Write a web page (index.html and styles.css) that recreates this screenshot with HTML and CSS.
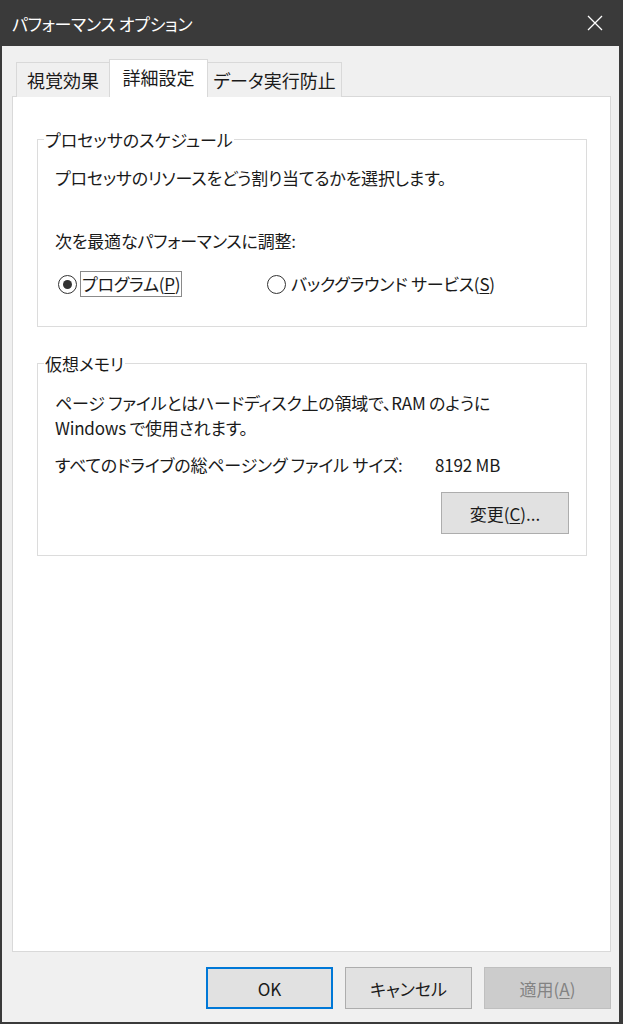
FILE: index.html
```html
<!DOCTYPE html>
<html lang="ja">
<head>
<meta charset="utf-8">
<title>パフォーマンス オプション</title>
<link rel="stylesheet" href="styles.css">
</head>
<body>
<div class="window">
  <div class="titlebar">
    <span class="title">パフォーマンス オプション</span>
    <svg class="close" width="16" height="16" viewBox="0 0 16 16"><path d="M1 1 L15 15 M15 1 L1 15" stroke="#ffffff" stroke-width="1.3" fill="none"/></svg>
  </div>
  <div class="client">
    <div class="tabs">
      <div class="tab tab1">視覚効果</div>
      <div class="tab tab-active">詳細設定</div>
      <div class="tab tab3">データ実行防止</div>
    </div>
    <div class="panel">
      <fieldset class="group group1">
        <legend>プロセッサのスケジュール</legend>
        <p class="line first">プロセッサのリソースをどう割り当てるかを選択します。</p>
        <p class="line adjust">次を最適なパフォーマンスに調整:</p>
        <div class="radios">
          <div class="radio-item item1">
            <span class="radio checked"></span>
            <span class="radio-label focus">プログラム(<u>P</u>)</span>
          </div>
          <div class="radio-item">
            <span class="radio"></span>
            <span class="radio-label">バックグラウンド サービス(<u>S</u>)</span>
          </div>
        </div>
      </fieldset>
      <fieldset class="group group2">
        <legend>仮想メモリ</legend>
        <p class="line first desc">ページ ファイルとはハードディスク上の領域で、RAM のように<br>Windows で使用されます。</p>
        <div class="line total"><span class="total-label">すべてのドライブの総ページング ファイル サイズ:</span><span>8192 MB</span></div>
        <div class="change-row"><button class="btn change">変更(<u>C</u>)...</button></div>
      </fieldset>
    </div>
    <div class="footer">
      <button class="btn default">OK</button>
      <button class="btn">キャンセル</button>
      <button class="btn disabled">適用(<u>A</u>)</button>
    </div>
  </div>
</div>
</body>
</html>
```
FILE: styles.css
```css
* { box-sizing: border-box; }
html, body { margin: 0; padding: 0; }
body {
  width: 623px;
  height: 1024px;
  background: #3a3a3a;
  font-family: "Noto Sans CJK JP", "Noto Sans", sans-serif;
  font-feature-settings: "palt";
  color: #1a1a1a;
  overflow: hidden;
}
.window {
  display: flex;
  flex-direction: column;
  height: 1024px;
}
.titlebar {
  height: 46px;
  flex: none;
  display: flex;
  align-items: center;
  justify-content: space-between;
  padding: 0 20px 0 12px;
  color: #ffffff;
  font-size: 17px;
}
.title { letter-spacing: -0.3px; }
.close { display: block; }
.client {
  flex: 1;
  margin: 0 4px 2px 2px;
  background: #f0f0f0;
  display: flex;
  flex-direction: column;
  padding: 13px 8px 13px 10px;
}
.tabs {
  display: flex;
  align-items: flex-end;
  margin-left: 4px;
  margin-bottom: -1px;
  position: relative;
  z-index: 1;
  font-size: 18px;
}
.tab {
  height: 35px;
  border: 1px solid #d9d9d9;
  border-bottom: none;
  background: #f0f0f0;
  display: flex;
  align-items: center;
  justify-content: center;
  line-height: 1;
}
.tab1 { width: 93px; border-right: none; }
.tab3 { width: 134px; border-left: none; }
.tab-active {
  width: 99px;
  height: 38px;
  background: #ffffff;
  padding-bottom: 3px;
}
.panel {
  flex: 1;
  background: #ffffff;
  border: 1px solid #d9d9d9;
  padding: 30px 23px 0 24px;
  font-size: 17px;
}
.group {
  margin: 0;
  border: 1px solid #dcdcdc;
  padding: 0 16px 0 17px;
  min-width: 0;
}
.group legend {
  padding: 0 1px;
  margin-left: -11px;
  line-height: 25px;
  font-size: 17px;
}
.line {
  margin: 0;
  line-height: 25px;
  letter-spacing: -0.2px;
}
.first { margin-top: 13px; }
.adjust { margin-top: 38px; }
.radios {
  display: flex;
  align-items: center;
  margin-top: 18px;
  margin-left: 3px;
  height: 26px;
  margin-bottom: 29px;
}
.radio-item {
  display: flex;
  align-items: center;
}
.item1 { width: 209px; }
.radio {
  width: 19px;
  height: 19px;
  border: 1.5px solid #333333;
  border-radius: 50%;
  display: flex;
  align-items: center;
  justify-content: center;
  margin-right: 3px;
  flex: none;
}
.radio.checked::after {
  content: "";
  width: 9px;
  height: 9px;
  border-radius: 50%;
  background: #333333;
}
.radio-label {
  line-height: 24px;
  letter-spacing: -0.2px;
  padding: 0 1px;
  border: 1px solid transparent;
}
.radio-label.focus {
  border: 1px solid #8a8a8a;
}
.radio-label u { text-underline-offset: 2px; }
.group2 { margin-top: 24px; }
.group2 .first { margin-top: 14px; }
.total {
  display: flex;
  margin-top: 12px;
}
.total-label { width: 380px; flex: none; }
.change-row {
  display: flex;
  justify-content: flex-end;
  margin-top: 15px;
  margin-bottom: 21px;
}
.btn {
  font-family: "Noto Sans CJK JP", "Noto Sans", sans-serif;
  font-feature-settings: "palt";
  font-size: 17px;
  color: #1a1a1a;
  width: 127px;
  height: 42px;
  background: #e1e1e1;
  border: 1px solid #adadad;
  padding: 0;
  margin: 0;
  line-height: 1;
}
.btn u { text-underline-offset: 2px; }
.change { width: 128px; margin-right: 1px; }
.footer {
  display: flex;
  justify-content: flex-end;
  gap: 12px;
  padding-top: 15px;
  padding-right: 0;
}
.btn.default { border: 2px solid #0078d7; }
.btn.disabled {
  background: #cccccc;
  border-color: #bfbfbf;
  color: #838383;
}
```
